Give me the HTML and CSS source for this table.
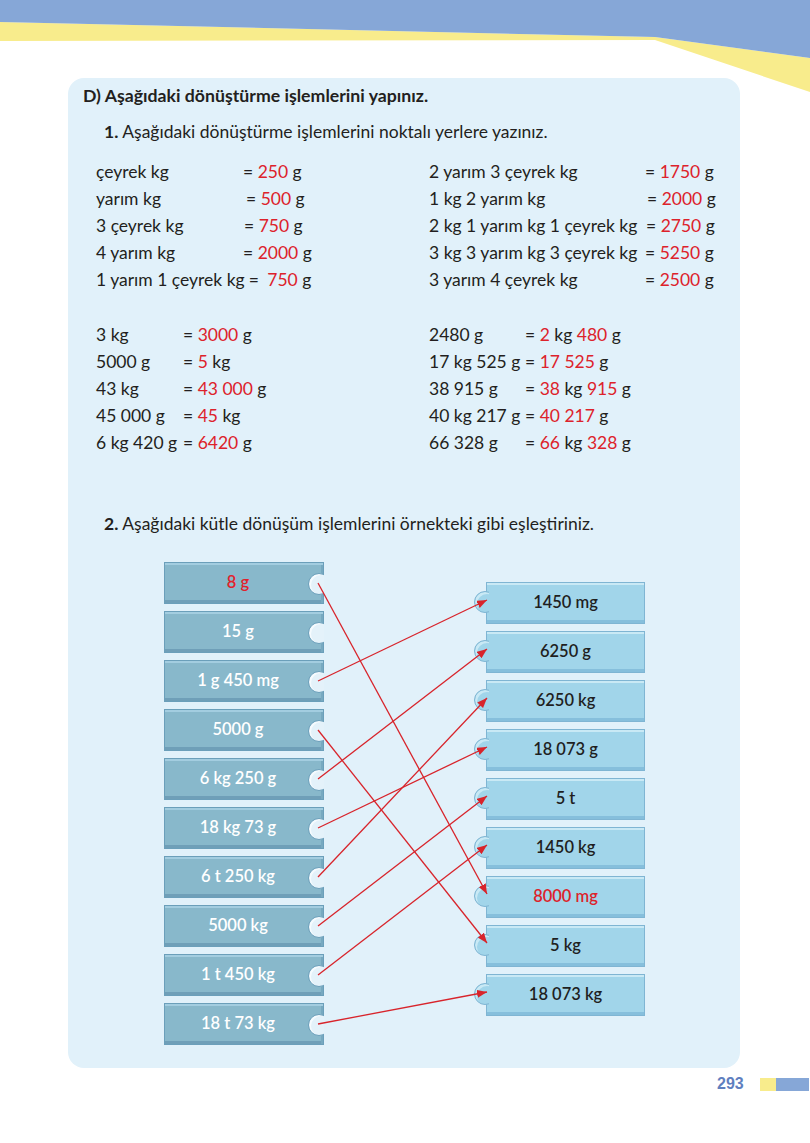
FILE: index.html
```html
<!DOCTYPE html>
<html lang="tr">
<head>
<meta charset="utf-8">
<title>293</title>
<link rel="stylesheet" href="styles.css">
</head>
<body>
<div class="page">
  <svg class="banner" width="810" height="78" viewBox="0 0 810 78" aria-hidden="true">
    <polygon points="0,22 655,37 810,58 810,92 655,40 0,41" fill="#f8ec8c"/>
    <polygon points="0,0 810,0 810,58 655,37 0,22" fill="#86a7d7"/>
  </svg>

  <section class="box">
    <h1 class="title">D) Aşağıdaki dönüştürme işlemlerini yapınız.</h1>
    <p class="q q1"><b>1.</b> Aşağıdaki dönüştürme işlemlerini noktalı yerlere yazınız.</p>

    <div class="cols set1">
      <div class="col">
        <div class="row"><span class="lbl w1">çeyrek kg</span><span>= <span class="r">250</span> g</span></div>
        <div class="row"><span class="lbl w1 s3">yarım kg</span><span>= <span class="r">500</span> g</span></div>
        <div class="row"><span class="lbl w1 s1">3 çeyrek kg</span><span>= <span class="r">750</span> g</span></div>
        <div class="row"><span class="lbl w1">4 yarım kg</span><span>= <span class="r">2000</span> g</span></div>
        <div class="row"><span class="lbl w1">1 yarım 1 çeyrek kg</span><span>= <span class="r gap">750</span> g</span></div>
      </div>
      <div class="col">
        <div class="row"><span class="lbl w2 s1">2 yarım 3 çeyrek kg</span><span>= <span class="r">1750</span> g</span></div>
        <div class="row"><span class="lbl w2 s3">1 kg 2 yarım kg</span><span>= <span class="r">2000</span> g</span></div>
        <div class="row"><span class="lbl w2 s2">2 kg 1 yarım kg 1 çeyrek kg</span><span>= <span class="r">2750</span> g</span></div>
        <div class="row"><span class="lbl w2">3 kg 3 yarım kg 3 çeyrek kg</span><span>= <span class="r">5250</span> g</span></div>
        <div class="row"><span class="lbl w2">3 yarım 4 çeyrek kg</span><span>= <span class="r">2500</span> g</span></div>
      </div>
    </div>

    <div class="cols set2">
      <div class="col">
        <div class="row"><span class="lbl w3">3 kg</span><span>= <span class="r">3000</span> g</span></div>
        <div class="row"><span class="lbl w3">5000 g</span><span>= <span class="r">5</span> kg</span></div>
        <div class="row"><span class="lbl w3">43 kg</span><span>= <span class="r">43 000</span> g</span></div>
        <div class="row"><span class="lbl w3">45 000 g</span><span>= <span class="r">45</span> kg</span></div>
        <div class="row"><span class="lbl w3">6 kg 420 g</span><span>= <span class="r">6420</span> g</span></div>
      </div>
      <div class="col">
        <div class="row"><span class="lbl w4">2480 g</span><span>= <span class="r">2</span> kg <span class="r">480</span> g</span></div>
        <div class="row"><span class="lbl w4">17 kg 525 g</span><span>= <span class="r">17 525</span> g</span></div>
        <div class="row"><span class="lbl w4">38 915 g</span><span>= <span class="r">38</span> kg <span class="r">915</span> g</span></div>
        <div class="row"><span class="lbl w4">40 kg 217 g</span><span>= <span class="r">40 217</span> g</span></div>
        <div class="row"><span class="lbl w4">66 328 g</span><span>= <span class="r">66</span> kg <span class="r">328</span> g</span></div>
      </div>
    </div>

    <p class="q q2"><b>2.</b> Aşağıdaki kütle dönüşüm işlemlerini örnekteki gibi eşleştiriniz.</p>

    <div class="match">
      <div class="left">
        <div class="tile lt"><span class="r">8 g</span></div>
        <div class="tile lt">15 g</div>
        <div class="tile lt">1 g 450 mg</div>
        <div class="tile lt">5000 g</div>
        <div class="tile lt">6 kg 250 g</div>
        <div class="tile lt">18 kg 73 g</div>
        <div class="tile lt">6 t 250 kg</div>
        <div class="tile lt">5000 kg</div>
        <div class="tile lt">1 t 450 kg</div>
        <div class="tile lt">18 t 73 kg</div>
      </div>
      <div class="right">
        <div class="tile rt">1450 mg</div>
        <div class="tile rt">6250 g</div>
        <div class="tile rt">6250 kg</div>
        <div class="tile rt">18 073 g</div>
        <div class="tile rt">5 t</div>
        <div class="tile rt">1450 kg</div>
        <div class="tile rt"><span class="r">8000 mg</span></div>
        <div class="tile rt">5 kg</div>
        <div class="tile rt">18 073 kg</div>
      </div>
      <svg class="lines" width="672" height="500" viewBox="0 0 672 500" aria-hidden="true">
        <defs>
          <marker id="ah" viewBox="0 0 10 8" refX="10" refY="4" markerWidth="10" markerHeight="8" markerUnits="userSpaceOnUse" orient="auto">
            <path d="M0,0 L10,4 L0,8 Z" fill="#d8242b"/>
          </marker>
        </defs>
        <g stroke="#d8242b" stroke-width="1.3" fill="none" marker-end="url(#ah)">
          <line x1="250" y1="21" x2="419" y2="332"/>
          <line x1="250" y1="119" x2="419" y2="38"/>
          <line x1="250" y1="168" x2="419" y2="381"/>
          <line x1="250" y1="217" x2="419" y2="87"/>
          <line x1="250" y1="266" x2="419" y2="185"/>
          <line x1="250" y1="315" x2="419" y2="136"/>
          <line x1="250" y1="364" x2="419" y2="234"/>
          <line x1="250" y1="413" x2="419" y2="283"/>
          <line x1="250" y1="462" x2="419" y2="430"/>
        </g>
      </svg>
    </div>
  </section>

  <footer class="foot">
    <span class="pno">293</span>
    <span class="bar-y"></span>
    <span class="bar-b"></span>
  </footer>
</div>
</body>
</html>
```

FILE: styles.css
```css
* { box-sizing: border-box; }

html, body {
  margin: 0;
  padding: 0;
  background: #ffffff;
}

body {
  font-family: Lato, "Open Sans", "DejaVu Sans", sans-serif;
  color: #231f20;
  font-size: 17.5px;
}

.page {
  width: 810px;
  height: 1143px;
  overflow: hidden;
  position: relative;
}

.banner {
  display: block;
  overflow: visible;
}

.box {
  margin-left: 68px;
  width: 672px;
  height: 990px;
  background: #e1f1fa;
  border-radius: 16px;
  padding: 4px 0 0 0;
}

.title {
  margin: 0 0 0 15px;
  font-size: 17.7px;
  font-weight: 700;
  line-height: 27px;
}

.q {
  margin: 9px 0 0 36px;
  line-height: 27px;
  font-size: 17.5px;
}

.q b { font-weight: 700; }

.q2 { margin-top: 54px; }

.cols {
  display: flex;
  padding-left: 28px;
  margin-top: 13px;
}

.set2 { margin-top: 28px; }

.col {
  flex: none;
  width: 333px;
}

.row {
  display: flex;
  line-height: 27px;
  height: 27px;
  white-space: nowrap;
}

.lbl {
  display: inline-block;
  padding-right: 4px;
}

.w1 { min-width: 147px; }
.w2 { min-width: 216px; }
.w3 { min-width: 87px; }
.w4 { min-width: 96px; }

.s1 { min-width: 148px; }
.s3 { min-width: 150px; }
.w2.s1 { min-width: 216px; }
.w2.s3 { min-width: 218px; }
.w2.s2 { min-width: 217px; }

.r { color: #dd222b; }
.gap { margin-left: 4px; }

.match {
  position: relative;
  margin-top: 25px;
  display: flex;
  height: 500px;
}

.left {
  margin-left: 96px;
  display: flex;
  flex-direction: column;
  gap: 7px;
}

.right {
  margin-left: 162px;
  margin-top: 20px;
  display: flex;
  flex-direction: column;
  gap: 7px;
}

.tile {
  position: relative;
  height: 42px;
  display: flex;
  align-items: center;
  justify-content: center;
  font-size: 16.5px;
  font-weight: 600;
  padding-bottom: 2px;
}

.lt {
  width: 160px;
  background: #88b8cb;
  color: #ffffff;
  overflow: hidden;
  padding-right: 12px;
  box-shadow:
    inset 0 0 0 1px #6b9fba,
    inset 0 3px 0 #a3cde0,
    inset -3px 0 0 #77a9c0,
    inset 0 -4px 0 #6f9fb8;
}

.lt::after {
  content: "";
  position: absolute;
  right: -6px;
  top: 50%;
  width: 20px;
  height: 20px;
  margin-top: -10px;
  border-radius: 50%;
  background: #e4f2fa;
  border: 1.5px solid #6b9fba;
  box-shadow: inset 2px 1px 0 #f6fbfe;
}

.lt .r { color: #e2212b; }

.rt {
  width: 159px;
  background: #a1d5ea;
  color: #1f1f1f;
  box-shadow:
    inset 0 0 0 1px #7fb5d3,
    inset 0 3px 0 #c9e9f5,
    inset 0 -4px 0 #86bfdc;
}

.rt::before {
  content: "";
  position: absolute;
  left: -12px;
  top: 50%;
  width: 20px;
  height: 20px;
  margin-top: -12px;
  border-radius: 50%;
  background: #a1d5ea;
  border: 1px solid #7fb5d3;
  box-shadow: inset 2px 2px 0 #c9e9f5;
  clip-path: inset(-2px 7px -2px -2px);
}

.rt .r { color: #dd222b; }

.lines {
  position: absolute;
  left: 0;
  top: 0;
  pointer-events: none;
}

.foot {
  display: flex;
  align-items: center;
  margin-top: 9px;
  height: 14px;
}

.pno {
  margin-left: 717px;
  font-family: "Liberation Sans", Arial, sans-serif;
  font-weight: 700;
  font-size: 16px;
  color: #5f7fbf;
  line-height: 14px;
}

.bar-y {
  margin-left: 16px;
  width: 16px;
  height: 13px;
  background: #f8ec8c;
}

.bar-b {
  width: 33px;
  height: 13px;
  background: #86a7d7;
}
```
